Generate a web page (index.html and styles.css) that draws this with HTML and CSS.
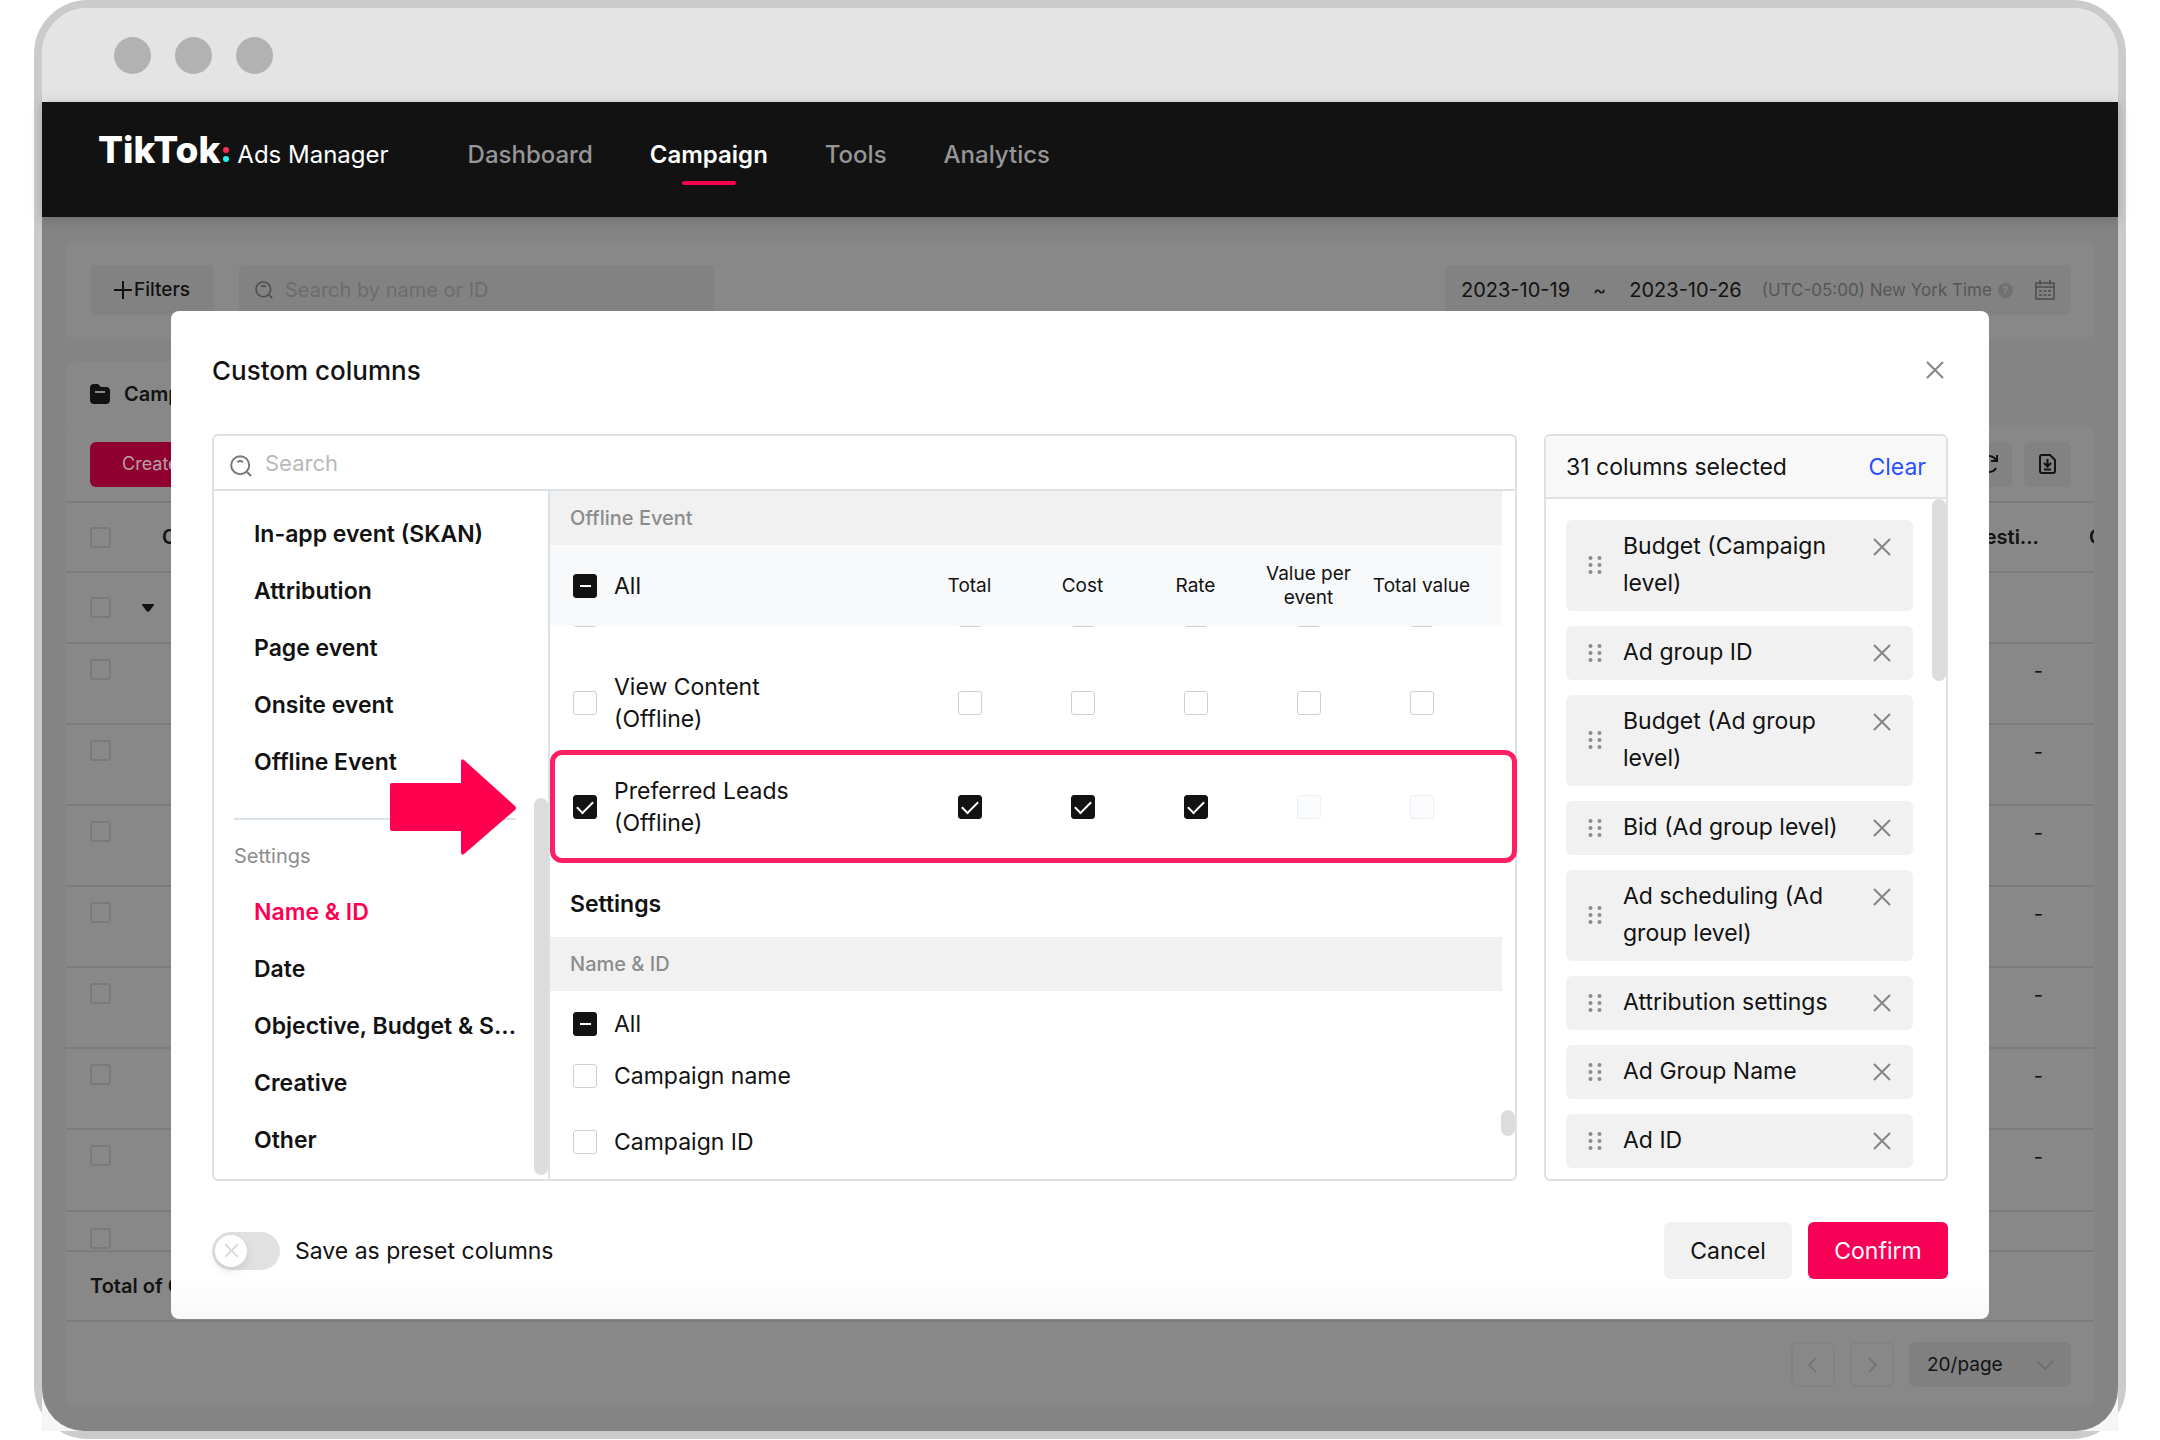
FILE: index.html
```html
<!DOCTYPE html>
<html lang="en">
<head>
<meta charset="utf-8">
<title>TikTok Ads Manager - Custom columns</title>
<link rel="stylesheet" href="styles.css">
</head>
<body>
<svg class="sprite" aria-hidden="true">
  <symbol id="i-search" viewBox="0 0 22 22"><circle cx="10.200" cy="10.200" r="9"/><path d="M17 17l4 4M7.500 7.200q2.700-2.400 5.400 0"/></symbol>
  <symbol id="i-close" viewBox="0 0 18 18"><path d="M1 1l16 16M17 1L1 17"/></symbol>
  <symbol id="i-drag" viewBox="0 0 14 18"><circle cx="2.500" cy="2" r="2"/><circle cx="11.500" cy="2" r="2"/><circle cx="2.500" cy="9" r="2"/><circle cx="11.500" cy="9" r="2"/><circle cx="2.500" cy="16" r="2"/><circle cx="11.500" cy="16" r="2"/></symbol>
</svg>
<div class="frame">
  <div class="titlebar"><i></i><i></i><i></i></div>
  <header class="nav">
    <div class="brand">
      <span class="brand-name">TikTok</span>
      <svg class="brand-dots" viewBox="0 0 6 16" aria-hidden="true"><circle cx="3" cy="3" r="3" fill="#fe2c55"/><circle cx="3" cy="12" r="3" fill="#25f4ee"/></svg>
      <span class="brand-sub">Ads Manager</span>
    </div>
    <nav class="links">
      <a href="#">Dashboard</a>
      <a href="#" class="current">Campaign</a>
      <a href="#">Tools</a>
      <a href="#">Analytics</a>
    </nav>
  </header>

  <div class="screen">
  <div class="page">
    <section class="filters">
      <button class="filter-btn" type="button"><svg viewBox="0 0 18 18"><path d="M9 0v18M0 9h18"/></svg>Filters</button>
      <label class="find"><svg><use href="#i-search"/></svg><input type="text" placeholder="Search by name or ID" aria-label="Search by name or ID"></label>
      <div class="dates">
        <span>2023-10-19</span><span class="to">~</span><span>2023-10-26</span>
        <span class="zone">(UTC-05:00) New York Time</span>
        <b class="help">?</b>
        <svg class="cal" viewBox="0 0 20 20"><path d="M1 3h18v16H1zM1 7h18M5 0v5M15 0v5M4 11h3M8.500 11h3M13 11h3M4 15h3M8.500 15h3M13 15h3"/></svg>
      </div>
    </section>

    <div class="tab"><svg viewBox="0 0 20 20"><path d="M0 4q0-4 4-4h4l3 3h5q4 0 4 4v9q0 4-4 4H4q-4 0-4-4z"/><path d="M5 8h10" stroke="#888888" stroke-width="2"/></svg>Campaign</div>

    <section class="board">
      <div class="tools">
        <button class="create" type="button">Create</button>
        <div class="tool-group">
          <button class="tool" type="button" aria-label="Refresh"><svg viewBox="0 0 20 20"><path d="M17 6A8 8 0 1 0 17 14M18 1v6h-6"/></svg></button>
          <button class="tool" type="button" aria-label="Download"><svg viewBox="0 0 20 20"><path d="M2 3q0-2 2-2h8l5 5v11q0 2-2 2H4q-2 0-2-2zM9.500 5v7M6 9l3.500 3.500L13 9M6 15.500h7"/></svg></button>
        </div>
      </div>
      <table class="data">
        <colgroup><col class="c-check"><col><col class="c-num"><col class="c-edge"></colgroup>
        <thead><tr><th><input type="checkbox" aria-label="Select all"></th><th class="onoff">On/Off</th><th class="num">Suggesti...</th><th>C</th></tr></thead>
        <tbody>
          <tr class="group"><td><input type="checkbox" aria-label="Select group"></td><td><svg class="caret" viewBox="0 0 12 8"><path d="M0 0h12v1L7.500 7q-1.500 1.500-3 0L0 1z"/></svg></td><td></td><td></td></tr>
          <tr><td><input type="checkbox" aria-label="Select row 1"></td><td></td><td class="num">-</td><td></td></tr>
          <tr><td><input type="checkbox" aria-label="Select row 2"></td><td></td><td class="num">-</td><td></td></tr>
          <tr><td><input type="checkbox" aria-label="Select row 3"></td><td></td><td class="num">-</td><td></td></tr>
          <tr><td><input type="checkbox" aria-label="Select row 4"></td><td></td><td class="num">-</td><td></td></tr>
          <tr><td><input type="checkbox" aria-label="Select row 5"></td><td></td><td class="num">-</td><td></td></tr>
          <tr><td><input type="checkbox" aria-label="Select row 6"></td><td></td><td class="num">-</td><td></td></tr>
          <tr><td><input type="checkbox" aria-label="Select row 7"></td><td></td><td class="num">-</td><td></td></tr>
        </tbody>
      </table>
      <div class="cut-row"><input type="checkbox" aria-label="Select row 8"></div>
      <div class="total">Total of Campaigns</div>
      <div class="pager">
        <button type="button" aria-label="Previous page"><svg viewBox="0 0 16 16"><path d="M11 1L4 8l7 7"/></svg></button>
        <button type="button" aria-label="Next page"><svg viewBox="0 0 16 16"><path d="M5 1l7 7-7 7"/></svg></button>
        <div class="per-page"><select aria-label="Rows per page"><option>20/page</option></select><svg viewBox="0 0 16 16"><path d="M0 4l8 8 8-8"/></svg></div>
      </div>
    </section>

    <div class="modal" role="dialog" aria-labelledby="modal-title">
      <div class="modal-head">
        <h1 id="modal-title">Custom columns</h1>
        <button class="x" type="button" aria-label="Close"><svg><use href="#i-close"/></svg></button>
      </div>
      <div class="modal-body">
        <div class="picker">
          <label class="search"><svg><use href="#i-search"/></svg><input type="text" placeholder="Search" aria-label="Search columns"></label>
          <div class="panes">
            <div class="side">
              <a href="#">In-app event (SKAN)</a>
              <a href="#">Attribution</a>
              <a href="#">Page event</a>
              <a href="#">Onsite event</a>
              <a href="#">Offline Event</a>
              <hr>
              <h2>Settings</h2>
              <a href="#" class="active">Name &amp; ID</a>
              <a href="#">Date</a>
              <a href="#">Objective, Budget &amp; S...</a>
              <a href="#">Creative</a>
              <a href="#">Other</a>
              <div class="thumb side-thumb"></div>
              <svg class="arrow" viewBox="0 0 126 96" aria-hidden="true"><path d="M2 24h69V3q0-4 3-2l51 46q2 2 0 4L74 95q-3 2-3-2V72H2q-2 0-2-2V26q0-2 2-2z"/></svg>
            </div>
            <div class="main">
              <h3 class="band">Offline Event</h3>
              <div class="events">
              <table>
                <colgroup><col><col class="c"><col class="c"><col class="c"><col class="c"><col class="c"><col class="pad"></colgroup>
                <thead><tr>
                  <th><label class="opt"><input type="checkbox" class="some">All</label></th>
                  <th>Total</th><th>Cost</th><th>Rate</th><th>Value per event</th><th>Total value</th><th></th>
                </tr></thead>
                <tbody>
                <tr class="tucked">
                  <td><label class="opt"><input type="checkbox"><span>Search (Offline)</span></label></td>
                  <td><input type="checkbox" aria-label="Total"></td><td><input type="checkbox" aria-label="Cost"></td><td><input type="checkbox" aria-label="Rate"></td><td><input type="checkbox" aria-label="Value per event"></td><td><input type="checkbox" aria-label="Total value"></td><td></td>
                </tr>
                <tr>
                  <td><label class="opt"><input type="checkbox"><span>View Content<br>(Offline)</span></label></td>
                  <td><input type="checkbox" aria-label="Total"></td><td><input type="checkbox" aria-label="Cost"></td><td><input type="checkbox" aria-label="Rate"></td><td><input type="checkbox" aria-label="Value per event"></td><td><input type="checkbox" aria-label="Total value"></td><td></td>
                </tr>
                <tr class="marked">
                  <td><label class="opt"><input type="checkbox" checked><span>Preferred Leads<br>(Offline)</span></label></td>
                  <td><input type="checkbox" checked aria-label="Total"></td><td><input type="checkbox" checked aria-label="Cost"></td><td><input type="checkbox" checked aria-label="Rate"></td><td><input type="checkbox" disabled aria-label="Value per event"></td><td><input type="checkbox" disabled aria-label="Total value"></td><td></td>
                </tr>
                </tbody>
              </table>
              </div>
              <h2>Settings</h2>
              <h3 class="band">Name &amp; ID</h3>
              <label class="opt all"><input type="checkbox" class="some">All</label>
              <label class="opt item"><input type="checkbox">Campaign name</label>
              <label class="opt item"><input type="checkbox">Campaign ID</label>
              <div class="thumb main-thumb"></div>
            </div>
          </div>
        </div>
        <div class="chosen">
          <div class="chosen-head"><span>31 columns selected</span><a href="#">Clear</a></div>
          <ul>
            <li><svg class="drag"><use href="#i-drag"/></svg><span>Budget (Campaign level)</span><button class="x" type="button" aria-label="Remove"><svg><use href="#i-close"/></svg></button></li>
            <li><svg class="drag"><use href="#i-drag"/></svg><span>Ad group ID</span><button class="x" type="button" aria-label="Remove"><svg><use href="#i-close"/></svg></button></li>
            <li><svg class="drag"><use href="#i-drag"/></svg><span>Budget (Ad group level)</span><button class="x" type="button" aria-label="Remove"><svg><use href="#i-close"/></svg></button></li>
            <li><svg class="drag"><use href="#i-drag"/></svg><span>Bid (Ad group level)</span><button class="x" type="button" aria-label="Remove"><svg><use href="#i-close"/></svg></button></li>
            <li><svg class="drag"><use href="#i-drag"/></svg><span>Ad scheduling (Ad group level)</span><button class="x" type="button" aria-label="Remove"><svg><use href="#i-close"/></svg></button></li>
            <li><svg class="drag"><use href="#i-drag"/></svg><span>Attribution settings</span><button class="x" type="button" aria-label="Remove"><svg><use href="#i-close"/></svg></button></li>
            <li><svg class="drag"><use href="#i-drag"/></svg><span>Ad Group Name</span><button class="x" type="button" aria-label="Remove"><svg><use href="#i-close"/></svg></button></li>
            <li><svg class="drag"><use href="#i-drag"/></svg><span>Ad ID</span><button class="x" type="button" aria-label="Remove"><svg><use href="#i-close"/></svg></button></li>
          </ul>
          <div class="thumb chosen-thumb"></div>
        </div>
      </div>
      <div class="modal-foot">
        <label class="preset"><input type="checkbox" class="switch" role="switch">Save as preset columns</label>
        <div class="actions"><button type="button" class="cancel">Cancel</button><button type="button" class="confirm">Confirm</button></div>
      </div>
    </div>
  </div>
  </div>
</div>
</body>
</html>
```
FILE: styles.css
```css
* { box-sizing: border-box; }
body { margin: 0; background: #ffffff; color: #121212; font: 400 23px/32px Inter, "Liberation Sans", sans-serif; }
button, input, select { font: inherit; color: inherit; border: 0; padding: 0; margin: 0; background: none; }
a { color: inherit; text-decoration: none; }
h1, h2, h3, ul { margin: 0; padding: 0; list-style: none; }
h1, h2, h3 { font-weight: 500; }
svg { display: block; flex: none; fill: none; stroke: currentColor; }
.sprite { position: absolute; width: 0; height: 0; }

/* window */
.frame { margin: 0 34px; border: 8px solid #cbcbcb; border-radius: 54px; }
.titlebar { display: flex; align-items: center; gap: 24px; height: 94px; padding: 0 72px; background: #e4e4e4; border-radius: 46px 46px 0 0; }
.titlebar i { width: 37px; height: 37px; border-radius: 50%; background: #b2b2b2; }

/* navigation */
.nav { position: relative; z-index: 1; display: flex; align-items: center; gap: 79px; height: 115px; padding: 0 56px 14px; background: #121212; color: #ffffff; box-shadow: 0 2px 12px rgba(0, 0, 0, 0.2); white-space: nowrap; }
.brand { display: flex; align-items: baseline; padding-bottom: 4px; }
.brand-name { font-size: 37px; font-weight: 800; line-height: 40px; }
.brand-dots { width: 6px; height: 16px; margin: 0 8px 0 3px; stroke: none; }
.brand-sub { font-size: 24px; }
.links { display: flex; gap: 57px; font-size: 24px; font-weight: 500; color: #969696; padding-top: 4px; }
.links a { position: relative; }
.links .current { color: #ffffff; font-weight: 600; }
.links .current::after { content: ""; position: absolute; left: 50%; bottom: -14px; width: 54px; height: 4px; margin-left: -27px; border-radius: 2px; background: #ff0050; }

/* dimmed page */
.screen { background: #f6f6f6; }
.page { position: relative; padding: 24px; background: #848484; border-radius: 0 0 42px 42px; font-size: 20px; }
.filters { display: flex; align-items: center; gap: 25px; height: 98px; padding: 0 23px 0 24px; background: #888888; border-radius: 8px; }
.filter-btn, .find, .dates { height: 50px; background: #828282; border-radius: 6px; display: flex; align-items: center; }
.filter-btn { justify-content: center; gap: 2px; width: 124px; font-size: 19px; font-weight: 500; }
.filter-btn svg { width: 18px; height: 18px; stroke-width: 2; }
.find { width: 475px; padding: 0 16px; gap: 12px; color: #4f4f4f; }
.find svg { width: 18px; height: 18px; stroke-width: 2; }
.find input { flex: 1; }
.find input::placeholder { color: #6c6c6c; opacity: 1; }
.dates { width: 626px; margin-left: auto; padding: 0 16px; white-space: nowrap; }
.dates .to { margin: 0 23px; }
.dates .zone { margin-left: 20px; font-size: 17px; color: #565656; }
.help { width: 15px; height: 15px; margin: 0 auto 0 6px; border-radius: 50%; background: #707070; color: #888888; font-size: 11px; line-height: 15px; text-align: center; }
.cal { width: 20px; height: 20px; color: #4c4c4c; stroke-width: 1.500; }
.tab { display: flex; align-items: center; gap: 14px; width: 300px; height: 65px; margin-top: 23px; padding: 0 24px 2px; background: #888888; border-radius: 12px 12px 0 0; font-weight: 600; }
.tab svg { width: 20px; height: 20px; fill: #121212; stroke: none; }
.board { background: #888888; border-radius: 8px; overflow: hidden; }
.tools { display: flex; align-items: center; justify-content: space-between; height: 74px; padding: 0 23px 0 24px; }
.create { width: 180px; height: 45px; padding-left: 32px; text-align: left; border-radius: 6px; background: #8f0030; color: #b5a0a6; font-size: 18px; }
.tool-group { display: flex; gap: 12px; }
.tool { display: grid; place-items: center; width: 47px; height: 45px; border-radius: 6px; background: #828282; }
.tool svg { width: 20px; height: 20px; stroke-width: 2; }
.data { width: 100%; table-layout: fixed; border-collapse: collapse; }
.data .c-check { width: 76px; }
.data .c-num { width: 200px; }
.data .c-edge { width: 5px; }
.data th, .data td { padding: 0; text-align: left; border-top: 2px solid #7c7c7c; overflow: hidden; white-space: nowrap; }
.data th { height: 70px; font-weight: 600; }
.data td { height: 81px; vertical-align: top; }
.data td.num { padding: 11px 46px 0 0; }
.data .group td { height: 71px; vertical-align: middle; }
.data .num { text-align: right; padding-right: 50px; }
.data .onoff { padding-left: 20px; }
.data th:first-child, .data td:first-child { padding-left: 24px; }
.data tr:not(.group) td:first-child { padding-top: 15px; }
.caret { width: 12px; height: 8px; fill: #121212; stroke: none; }
.cut-row { height: 40px; padding: 16px 24px 0; border-top: 2px solid #7c7c7c; overflow: hidden; }
.total { height: 70px; padding: 0 24px; line-height: 68px; font-weight: 600; border-top: 2px solid #7c7c7c; }
.pager { display: flex; justify-content: flex-end; gap: 15px; height: 87px; padding: 20px 23px 0; border-top: 2px solid #7c7c7c; }
.pager button { display: grid; place-items: center; width: 44px; height: 45px; border: 2px solid #828282; border-radius: 6px; color: #707070; }
.pager svg { width: 16px; height: 16px; stroke-width: 1.500; }
.per-page { display: flex; align-items: center; width: 162px; height: 45px; padding: 0 18px; background: #808080; border-radius: 6px; }
.per-page select { flex: 1; appearance: none; font-size: 19px; }
.per-page svg { color: #6a6a6a; }

/* tick boxes */
input[type="checkbox"] { display: grid; place-items: center; appearance: none; flex: none; width: 24px; height: 24px; border: 1px solid #cfcfcf; border-radius: 3px; background: #ffffff; }
.board input[type="checkbox"] { width: 21px; height: 21px; border: 2px solid #7a7a7a; background: none; }
input:checked, input[type="checkbox"].some { background: #121212; border-color: #121212; }
input[type="checkbox"]:checked { background: #121212; border-color: #121212; }
input:checked::after { content: ""; width: 14px; height: 7px; border: solid #ffffff; border-width: 0 0 2px 2px; transform: translateY(-2px) rotate(-45deg); }
.some::after { content: ""; width: 11px; height: 2px; background: #ffffff; }
input[type="checkbox"]:disabled { background: #fbfcfd; border-color: #edf0f3; }

/* dialog */
.modal { position: absolute; z-index: 2; top: 94px; left: 129px; right: 129px; padding: 39px 41px 40px; border-radius: 8px; background: linear-gradient(#ffffff calc(100% - 40px), #f8f8f8); font-size: 23px; }
.modal-head { display: flex; align-items: center; justify-content: space-between; height: 40px; margin-bottom: 44px; }
.modal-head h1 { font-size: 26px; padding-top: 2px; }
.modal-head .x { margin-right: 4px; }
.x { width: 18px; height: 18px; color: #858585; }
.x svg { width: 18px; height: 18px; stroke-width: 2; }
.modal-body { display: grid; grid-template-columns: 1fr 404px; gap: 27px; height: 747px; }
.picker, .chosen { display: flex; flex-direction: column; min-height: 0; border: 2px solid #dce1e6; border-radius: 6px; background: #ffffff; }
.search { display: flex; align-items: center; gap: 13px; height: 55px; flex: none; padding: 0 16px; border-bottom: 2px solid #dce1e6; color: #777777; font-size: 22px; }
.search svg { width: 22px; height: 22px; stroke-width: 2; margin-top: 6px; }
.search input { flex: 1; }
.search input::placeholder { color: #b9b9b9; opacity: 1; }
.panes { display: grid; grid-template: minmax(0, 1fr) / 336px 1fr; flex: 1; min-height: 0; }
.side { position: relative; padding: 15px 20px 0; border-right: 2px solid #dce1e6; white-space: nowrap; }
.side a { display: block; padding-left: 20px; line-height: 57px; font-weight: 600; }
.side .active { color: #ff0050; }
.side hr { height: 2px; margin: 27px 12px 0 0; border: 0; background: #dce3e8; }
.side h2 { margin: 21px 0 13px; font-size: 20px; line-height: 30px; font-weight: 400; color: #8c8c8c; }
.thumb { position: absolute; width: 14px; border-radius: 7px; background: #dcdcdc; }
.side-thumb { right: 0; bottom: 4px; height: 377px; }
.arrow { position: absolute; z-index: 1; left: 176px; top: 268px; width: 126px; height: 96px; fill: #ff0050; stroke: none; }
.main { position: relative; min-width: 0; }
.main .band { height: 54px; margin-right: 13px; padding-left: 20px; background: #f1f1f1; color: #8c8c8c; font-size: 20px; line-height: 54px; }
.main h2 { margin-top: 29px; margin-bottom: 17px; padding-left: 20px; font-size: 23px; line-height: 32px; font-weight: 600; }
.events { padding-right: 13px; }
.events table { width: 100%; height: 314px; table-layout: fixed; border-collapse: collapse; }
.events .c { width: 113px; }
.events .pad { width: 24px; }
.events th { position: relative; z-index: 1; height: 81px; padding: 0; background: #f8f9fb; font-size: 19px; line-height: 24px; font-weight: 400; }
.events td { height: 104px; padding: 0; }
.events td > input { margin: 0 auto; }
.events .tucked td { height: 25px; vertical-align: top; }
.tucked td > input { margin-top: -23px; }
.tucked .opt { margin-top: -27px; }
.marked { position: relative; }
.marked td:first-child::after { content: ""; position: absolute; inset: -5px -15px -4px 0; border: 5px solid #fe2062; border-radius: 12px; pointer-events: none; }
.opt { display: flex; align-items: center; gap: 17px; padding-left: 23px; font-size: 23px; line-height: 32px; text-align: left; }
.main .all { height: 65px; }
.main .item { height: 40px; margin-bottom: 26px; }
.main-thumb { right: 0; bottom: 43px; height: 26px; }

/* selected columns */
.chosen { position: relative; overflow: hidden; }
.chosen-head { display: flex; align-items: center; justify-content: space-between; flex: none; height: 63px; padding: 0 20px; background: #f8f8f8; border-bottom: 2px solid #dce1e6; }
.chosen-head a { color: #2b50ff; }
.chosen ul { display: flex; flex-direction: column; gap: 15px; padding: 21px 33px 0 20px; }
.chosen li { display: flex; align-items: center; padding: 8px 22px 9px 22px; border-radius: 6px; background: #f1f1f1; line-height: 37px; }
.chosen li span { flex: 1; margin-right: -20px; padding: 0 30px 0 21px; }
.chosen li .x { align-self: flex-start; margin-top: 10px; }
.drag { width: 14px; height: 18px; fill: #8c8c8c; stroke: none; }
.chosen-thumb { top: 63px; right: 0; height: 182px; }

/* footer */
.modal-foot { display: flex; align-items: center; justify-content: space-between; height: 57px; margin-top: 41px; }
.preset { display: flex; align-items: center; gap: 15px; }
.preset .switch { position: relative; width: 68px; height: 38px; border: 0; border-radius: 19px; background: #e1e1e1; }
.switch::before { content: ""; position: absolute; left: 3px; top: 3px; width: 32px; height: 32px; border-radius: 50%; background: linear-gradient(45deg, transparent 44%, #dddddd 44% 56%, transparent 56%) center / 13px 13px no-repeat, linear-gradient(-45deg, transparent 44%, #dddddd 44% 56%, transparent 56%) center / 13px 13px no-repeat, #ffffff; box-shadow: 0 4px 10px rgba(0, 0, 0, 0.1); }
.actions { display: flex; gap: 16px; }
.actions button { height: 57px; border-radius: 6px; }
.cancel { width: 128px; background: #f1f1f1; }
.actions .confirm { width: 140px; background: #f90057; color: #ffffff; }
```
